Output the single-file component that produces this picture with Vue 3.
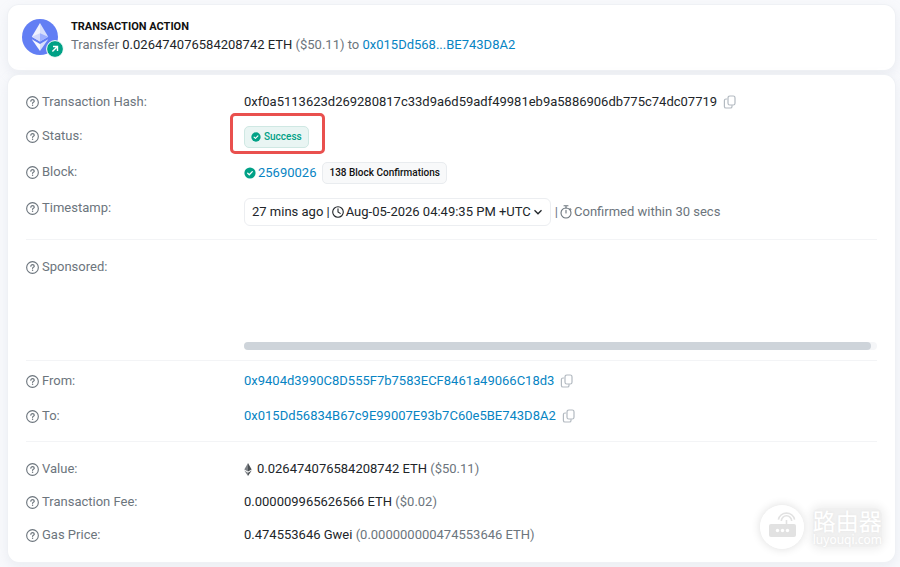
<script setup>
import { ref } from 'vue';

const action = {
  amount: '0.026474076584208742 ETH',
  usd: '($50.11)',
  to: '0x015Dd568...BE743D8A2',
};

const tx = {
  hash: '0xf0a5113623d269280817c33d9a6d59adf49981eb9a5886906db775c74dc07719',
  block: '25690026',
  confirmations: 138,
  age: '27 mins ago',
  time: 'Aug-05-2026 04:49:35 PM +UTC',
};

const addresses = [
  { label: 'From:', value: '0x9404d3990C8D555F7b7583ECF8461a49066C18d3' },
  { label: 'To:', value: '0x015Dd56834B67c9E99007E93b7C60e5BE743D8A2' },
];

const amounts = [
  { label: 'Value:', value: '0.026474076584208742 ETH', note: '($50.11)', eth: true },
  { label: 'Transaction Fee:', value: '0.000009965626566 ETH', note: '($0.02)' },
  { label: 'Gas Price:', value: '0.474553646 Gwei', note: '(0.000000000474553646 ETH)' },
];

const copied = ref('');

function copy(text) {
  copied.value = text;
  navigator.clipboard?.writeText(text);
}
</script>

<template>
  <!-- shared icon shapes -->
  <svg class="symbols" aria-hidden="true">
    <symbol id="help" viewBox="0 0 14 14">
      <circle cx="7" cy="7" r="6.3" fill="none" stroke="currentColor" stroke-width="1.2" />
      <path d="M5.2 5.6c0-1 .7-1.6 1.8-1.6s1.9.7 1.9 1.6c0 1.2-1.8 1.2-1.8 2.3" fill="none" stroke="currentColor" stroke-width="1.3" stroke-linecap="round" />
      <circle cx="7.1" cy="9.9" r=".8" fill="currentColor" />
    </symbol>
    <symbol id="check" viewBox="0 0 12 12">
      <circle cx="6" cy="6" r="5.6" fill="currentColor" />
      <path d="M3.7 6.2l1.6 1.5 3-3.1" fill="none" stroke="#fff" stroke-width="1.3" stroke-linecap="round" stroke-linejoin="round" />
    </symbol>
    <symbol id="copy" viewBox="0 0 14 14">
      <rect x="5" y="1" width="7" height="9" rx="1.8" fill="none" stroke="currentColor" stroke-width="1.2" />
      <path d="M3.6 4H3a1.6 1.6 0 0 0-1.6 1.6v5.8A1.6 1.6 0 0 0 3 13h4.4A1.6 1.6 0 0 0 9 11.4v-.9" fill="none" stroke="currentColor" stroke-width="1.2" stroke-linecap="round" />
    </symbol>
  </svg>

  <main class="page">
    <section class="card action">
      <div class="token">
        <svg viewBox="0 0 36 36" class="token-logo">
          <circle cx="18" cy="18" r="18" fill="#627ef4" />
          <path d="M18 4l-8.2 13.8L18 22.6z" fill="#fff" fill-opacity=".9" />
          <path d="M18 4l8.2 13.8L18 22.6z" fill="#fff" fill-opacity=".75" />
          <path d="M18 14.2l-8.2 3.6L18 22.6z" fill="#d0d8fc" />
          <path d="M18 14.2l8.2 3.6L18 22.6z" fill="#9dafff" />
          <path d="M9.8 20.2L18 32v-7z" fill="#fff" fill-opacity=".95" />
          <path d="M26.2 20.2L18 32v-7z" fill="#fff" fill-opacity=".75" />
        </svg>
        <svg viewBox="0 0 18 18" class="token-badge">
          <circle cx="9" cy="9" r="8.4" fill="#00a186" stroke="#fff" stroke-width="1" />
          <path d="M6.4 11.6l4.8-4.8M7 6.5h4.5V11" fill="none" stroke="#fff" stroke-width="1.4" />
        </svg>
      </div>
      <div>
        <h1>TRANSACTION ACTION</h1>
        <p>
          Transfer <span class="dark">{{ action.amount }}</span> {{ action.usd }} to
          <a href="#">{{ action.to }}</a>
        </p>
      </div>
    </section>

    <section class="card details">
      <div class="group">
        <div class="row">
          <div class="label"><svg class="help"><use href="#help" /></svg>Transaction Hash:</div>
          <div class="value">
            <span>{{ tx.hash }}</span>
            <button type="button" class="copy" aria-label="Copy" @click="copy(tx.hash)">
              <svg><use href="#copy" /></svg>
            </button>
          </div>
        </div>
        <div class="row">
          <div class="label"><svg class="help"><use href="#help" /></svg>Status:</div>
          <div class="value">
            <span class="badge success"><svg class="check small"><use href="#check" /></svg>Success</span>
          </div>
        </div>
        <div class="row">
          <div class="label"><svg class="help"><use href="#help" /></svg>Block:</div>
          <div class="value">
            <svg class="check"><use href="#check" /></svg>
            <a href="#" class="block">{{ tx.block }}</a>
            <span class="badge">{{ tx.confirmations }} Block Confirmations</span>
          </div>
        </div>
        <div class="row">
          <div class="label"><svg class="help"><use href="#help" /></svg>Timestamp:</div>
          <div class="value">
            <button type="button" class="time">
              {{ tx.age }} |
              <svg class="clock" viewBox="0 0 12 12">
                <circle cx="6" cy="6" r="5.3" />
                <path d="M6 2.8V6l2.2 1.4" />
              </svg>
              {{ tx.time }}
              <svg class="chevron" viewBox="0 0 10 10"><path d="M1.5 3.3L5 6.8l3.5-3.5" /></svg>
            </button>
            <span class="muted confirmed">
              |
              <svg class="clock" viewBox="0 0 12 14">
                <circle cx="6" cy="8" r="5" />
                <path d="M6 5.2V8M4 .7h4M6 .7V3M10 3.6l.9.8" />
              </svg>
              Confirmed within 30 secs
            </span>
          </div>
        </div>
      </div>

      <div class="group sponsored">
        <div class="row">
          <div class="label"><svg class="help"><use href="#help" /></svg>Sponsored:</div>
          <div class="banner">
            <div class="track"><div class="thumb"></div></div>
          </div>
        </div>
      </div>

      <div class="group addresses">
        <div class="row" v-for="item in addresses" :key="item.label">
          <div class="label"><svg class="help"><use href="#help" /></svg>{{ item.label }}</div>
          <div class="value">
            <a href="#">{{ item.value }}</a>
            <button type="button" class="copy" aria-label="Copy" @click="copy(item.value)">
              <svg><use href="#copy" /></svg>
            </button>
          </div>
        </div>
      </div>

      <div class="group amounts">
        <div class="row" v-for="item in amounts" :key="item.label">
          <div class="label"><svg class="help"><use href="#help" /></svg>{{ item.label }}</div>
          <div class="value">
            <svg v-if="item.eth" class="eth" viewBox="0 0 8 13">
              <path d="M4 0L.3 6.4 4 8.6z" fill="#7d8186" />
              <path d="M4 0l3.7 6.4L4 8.6z" fill="#4d5256" />
              <path d="M.3 7.5L4 13V9.7z" fill="#7d8186" />
              <path d="M7.7 7.5L4 13V9.7z" fill="#4d5256" />
            </svg>
            <span>{{ item.value }} <span class="muted">{{ item.note }}</span></span>
          </div>
        </div>
      </div>
    </section>

    <div class="watermark">
      <svg viewBox="0 0 44 44">
        <circle cx="22" cy="22" r="22" fill="#fff" />
        <rect x="9" y="19" width="27" height="13" rx="2" fill="#e2e2e2" />
        <path d="M26.5 19v-4M21.3 16a5.2 5.2 0 0 1 10.4 0M18.4 14.6a8.3 8.3 0 0 1 16.2 0" fill="none" stroke="#e2e2e2" stroke-width="1.6" />
        <circle cx="17.5" cy="25.5" r="1.7" fill="#fff" />
        <circle cx="22.5" cy="25.5" r="1.7" fill="#fff" />
        <circle cx="27.5" cy="25.5" r="1.7" fill="#fff" />
      </svg>
      <div class="names">
        <div class="site">路由器</div>
        <div class="domain">luyouqi.com</div>
      </div>
    </div>
  </main>
</template>

<style>
body {
  margin: 0;
  background: #f8f9fc;
}
</style>

<style scoped>
.symbols {
  position: absolute;
  width: 0;
  height: 0;
}

.page {
  position: relative;
  display: flex;
  flex-direction: column;
  gap: 5px;
  padding: 5px 5px 5px 8px;
  font-family: Roboto, "Liberation Sans", "Noto Sans CJK SC", sans-serif;
  font-size: 13px;
  line-height: 20px;
  color: #212529;
}

.card {
  border-radius: 11px;
  background: #fff;
  box-shadow: 0 0 0 1px #eff1f5, 0 4px 12px rgba(189, 197, 209, 0.25);
}

.action {
  display: flex;
  align-items: center;
  gap: 13px;
  padding: 14px 14px 15px;
  color: #6c757d;
}

.token {
  position: relative;
  width: 36px;
  height: 36px;
}

.token-logo {
  display: block;
  width: 36px;
  height: 36px;
}

.token-badge {
  position: absolute;
  right: -6px;
  bottom: -3px;
  width: 18px;
  height: 18px;
}

h1 {
  margin: 0;
  font-size: 11px;
  line-height: 16px;
  font-weight: 700;
  color: #111;
}

p {
  margin: 0;
}

a {
  color: #0784c3;
  text-decoration: none;
}

button {
  font: inherit;
  color: inherit;
  cursor: pointer;
}

.dark {
  color: #212529;
}

.muted {
  color: #6c757d;
}

.details {
  padding: 0 18px;
}

.group {
  display: flex;
  flex-direction: column;
  gap: 14px;
  padding: 17px 0 13px;
}

.group + .group {
  border-top: 1px solid #f3f4f6;
}

.row {
  display: grid;
  grid-template-columns: 218px 1fr;
}

.label {
  display: flex;
  align-items: center;
  gap: 3px;
  height: 20px;
  color: #6c757d;
}

.help {
  width: 13px;
  height: 13px;
}

.value {
  display: flex;
  align-items: center;
  white-space: nowrap;
}

.copy {
  width: 14px;
  height: 14px;
  margin-left: 6px;
  padding: 0;
  border: 0;
  background: none;
  color: #b3bac1;
}

.copy svg {
  display: block;
  width: 14px;
  height: 14px;
}

.check {
  width: 12px;
  height: 12px;
  color: #00a186;
}

.check.small {
  width: 10px;
  height: 10px;
}

.badge {
  position: relative;
  display: flex;
  align-items: center;
  gap: 3px;
  box-sizing: border-box;
  height: 22px;
  padding: 0 6px;
  border: 1px solid #e9ecef;
  border-radius: 5px;
  background: #f8f9fa;
  font-size: 10px;
  font-weight: 500;
  color: #111;
}

.success {
  border-color: #cfe8e3;
  background: #e9f5f3;
  color: #00a186;
}

/* red frame that draws attention to the status */
.success::after {
  content: "";
  position: absolute;
  inset: -14px -17px -7px -15px;
  border: 3px solid #e9504e;
  border-radius: 5px;
}

.block {
  margin: 0 6px 0 2px;
}

.time {
  display: flex;
  align-items: center;
  gap: 2px;
  box-sizing: border-box;
  height: 28px;
  padding: 0 7px;
  border: 1px solid #eceef1;
  border-radius: 6px;
  background: #fff;
}

.clock {
  width: 12px;
  height: 12px;
  fill: none;
  stroke: currentColor;
  stroke-width: 1.1;
  stroke-linecap: round;
}

.confirmed .clock {
  height: 14px;
}

.chevron {
  width: 10px;
  height: 10px;
  fill: none;
  stroke: currentColor;
  stroke-width: 1.3;
}

.confirmed {
  display: flex;
  align-items: center;
  gap: 2px;
  margin-left: 4px;
}

.sponsored {
  padding: 17px 0 10px;
}

.banner {
  display: flex;
  align-items: flex-end;
  height: 93px;
}

.track {
  width: 100%;
  height: 8px;
  border-radius: 4px;
  background: #f5f6f8;
}

.thumb {
  width: 99%;
  height: 8px;
  border-radius: 4px;
  background: #ced4da;
}

.addresses {
  gap: 15px;
  padding: 10px 0 15px;
}

.amounts {
  gap: 13px;
  padding: 17px 0;
}

.eth {
  width: 8px;
  height: 13px;
  margin-right: 5px;
}

/* site mark over the lower right corner */
.watermark {
  position: absolute;
  right: 18px;
  bottom: 18px;
  display: flex;
  align-items: center;
  gap: 9px;
  color: #fff;
  pointer-events: none;
}

.watermark svg {
  width: 44px;
  height: 44px;
  border-radius: 50%;
  box-shadow: 0 0 10px #ddd;
}

.names {
  border-radius: 8px;
  background: #f0f0f0;
  box-shadow: 0 0 9px 3px #f0f0f0;
  text-shadow: 0 0 3px #e4e4e4;
}

.site {
  font-family: "Noto Sans CJK SC", sans-serif;
  font-size: 23px;
  line-height: 24px;
}

.domain {
  font-family: "Noto Sans", sans-serif;
  font-size: 12px;
  line-height: 15px;
}
</style>
